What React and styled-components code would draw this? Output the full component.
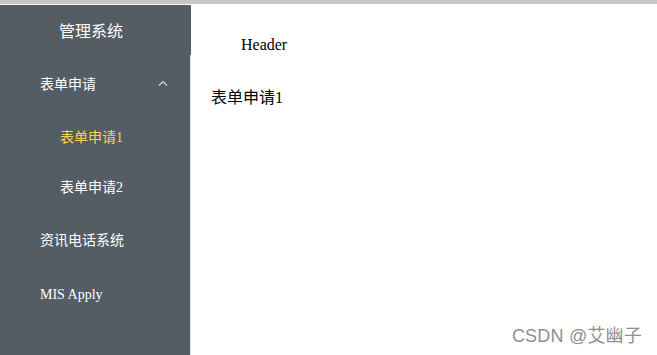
import styled, { createGlobalStyle } from 'styled-components'

const GlobalStyle = createGlobalStyle`
    html, body {
        margin: 0;
        padding: 0;
        height: 100%;
        background: #fff;
        font-family: "Liberation Serif", "Noto Sans CJK SC", serif;
    }
    #root {
        height: 100%;
    }
`

const Page = styled.div`
    display: flex;
    flex-direction: column;
    height: 100vh;
    border-top: 4px solid #c6c6c6;
    padding-top: 1px;
    box-sizing: border-box;
    position: relative;
`

const Layout = styled.div`
    display: flex;
    flex: 1;
`

const Aside = styled.aside`
    width: 191px;
    background-color: #545c64;
    display: flex;
    flex-direction: column;
`

const Logo = styled.div`
    height: 50px;
    line-height: 50px;
    padding-right: 9px;
    text-align: center;
    color: #fff;
    font-size: 16px;
    font-family: "Noto Sans CJK SC", sans-serif;
`

const Menu = styled.ul`
    list-style: none;
    margin: 0;
    padding: 0;
    flex: 1;
    border-right: 1px solid #e6e6e6;
`

const MenuItem = styled.li`
    display: flex;
    align-items: center;
    justify-content: space-between;
    height: ${(p) => (p.$sub ? 50 : 56)}px;
    padding-left: ${(p) => (p.$sub ? 60 : 40)}px;
    padding-right: 22px;
    font-size: 14px;
    color: ${(p) => (p.$active ? '#ffd04b' : '#fff')};
    cursor: pointer;
`

const Label = styled.span`
    font-family: ${(p) => (p.$latin ? '"Liberation Serif", serif' : '"Liberation Serif", "Noto Sans CJK SC", serif')};
`

const Arrow = () => (
    <svg width="10" height="6" viewBox="0 0 10 6" fill="none" stroke="#d8d8d8" strokeWidth="1.2">
        <path d="M1 5.5 L5 1.5 L9 5.5" />
    </svg>
)

const Container = styled.section`
    flex: 1;
    display: flex;
    flex-direction: column;
`

const Header = styled.header`
    height: 60px;
    padding: 20px 0 0 50px;
    box-sizing: border-box;
    line-height: 40px;
    font-size: 16px;
    color: #000;
`

const Main = styled.main`
    padding: 21px 20px;
    font-size: 16px;
    line-height: 24px;
    color: #000;
`

const Watermark = styled.div`
    position: absolute;
    right: 15px;
    bottom: 8px;
    font-family: "Liberation Sans", "Noto Sans CJK SC", sans-serif;
    font-size: 18px;
    letter-spacing: 0.2px;
    color: #8f8f8f;
    text-shadow: 0 0 1px #fff;
`

export default function App() {
    return (
        <>
            <GlobalStyle />
            <Page>
                <Layout>
                    <Aside>
                        <Logo>管理系统</Logo>
                        <Menu>
                            <MenuItem>
                                <Label>表单申请</Label>
                                <Arrow />
                            </MenuItem>
                            <MenuItem $sub $active>
                                <Label>表单申请1</Label>
                            </MenuItem>
                            <MenuItem $sub>
                                <Label>表单申请2</Label>
                            </MenuItem>
                            <MenuItem>
                                <Label>资讯电话系统</Label>
                            </MenuItem>
                            <MenuItem>
                                <Label $latin>MIS Apply</Label>
                            </MenuItem>
                        </Menu>
                    </Aside>
                    <Container>
                        <Header>Header</Header>
                        <Main>表单申请1</Main>
                    </Container>
                </Layout>
                <Watermark>CSDN @艾幽子</Watermark>
            </Page>
        </>
    )
}
